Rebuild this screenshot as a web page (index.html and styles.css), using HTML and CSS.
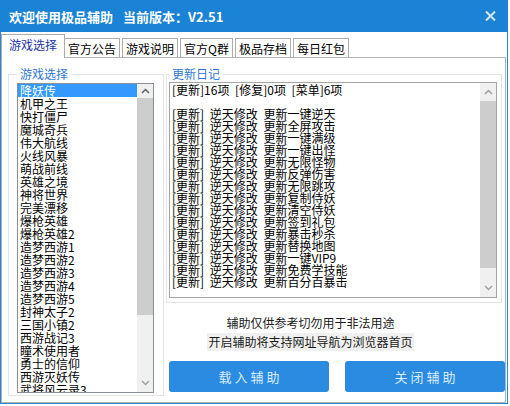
FILE: index.html
```html
<!DOCTYPE html>
<html>

<head>
    <meta charset="utf-8">
    <title>极品辅助</title>
    <link rel="stylesheet" href="styles.css">
</head>

<body>
    <div class="window">
        <header class="titlebar">
            <span class="title">欢迎使用极品辅助</span>
            <span class="version">当前版本：V2.51</span>
            <svg class="close" width="11" height="10" viewBox="0 0 11 10">
                <path d="M1 0.5 L10 9.5 M10 0.5 L1 9.5" stroke="#d4e8f8" stroke-width="2" fill="none" />
            </svg>
        </header>

        <nav class="tabs">
            <span class="tab active">游戏选择</span>
            <span class="tab second">官方公告</span>
            <span class="tab">游戏说明</span>
            <span class="tab">官方Q群</span>
            <span class="tab">极品存档</span>
            <span class="tab">每日红包</span>
        </nav>

        <div class="panel">
            <fieldset class="group games">
                <legend>游戏选择</legend>
                <div class="listbox">
                    <ul class="items">
                        <li class="selected">降妖传</li>
                        <li>机甲之王</li>
                        <li>快打僵尸</li>
                        <li>魔城奇兵</li>
                        <li>伟大航线</li>
                        <li>火线风暴</li>
                        <li>萌战前线</li>
                        <li>英雄之境</li>
                        <li>神将世界</li>
                        <li>完美漂移</li>
                        <li>爆枪英雄</li>
                        <li>爆枪英雄2</li>
                        <li>造梦西游1</li>
                        <li>造梦西游2</li>
                        <li>造梦西游3</li>
                        <li>造梦西游4</li>
                        <li>造梦西游5</li>
                        <li>封神太子2</li>
                        <li>三国小镇2</li>
                        <li>西游战记3</li>
                        <li>瞳术使用者</li>
                        <li>勇士的信仰</li>
                        <li>西游灭妖传</li>
                        <li>武将风云录3</li>
                    </ul>
                    <div class="vscroll list-scroll">
                        <span class="arrow"><svg width="9" height="6" viewBox="0 0 9 6"><path d="M1 5 L4.5 1.5 L8 5" stroke="#606060" stroke-width="1.5" fill="none" /></svg></span>
                        <span class="thumb"></span>
                        <span class="track"></span>
                        <span class="arrow"><svg width="9" height="6" viewBox="0 0 9 6"><path d="M1 1 L4.5 4.5 L8 1" stroke="#a0a0a0" stroke-width="1.5" fill="none" /></svg></span>
                    </div>
                </div>
            </fieldset>

            <div class="side">
                <fieldset class="group log-group">
                    <legend>更新日记</legend>
                    <div class="textbox">
<pre class="log">[更新]16项 [修复]0项 [菜单]6项

[更新] 逆天修改 更新一键逆天
[更新] 逆天修改 更新全屏攻击
[更新] 逆天修改 更新一键满级
[更新] 逆天修改 更新一键出怪
[更新] 逆天修改 更新无限怪物
[更新] 逆天修改 更新反弹伤害
[更新] 逆天修改 更新无限跳攻
[更新] 逆天修改 更新复制侍妖
[更新] 逆天修改 更新清空侍妖
[更新] 逆天修改 更新签到礼包
[更新] 逆天修改 更新暴击秒杀
[更新] 逆天修改 更新替换地图
[更新] 逆天修改 更新一键VIP9
[更新] 逆天修改 更新免费学技能
[更新] 逆天修改 更新百分百暴击</pre>
                        <div class="vscroll log-scroll">
                            <span class="arrow"><svg width="9" height="6" viewBox="0 0 9 6"><path d="M1 5 L4.5 1.5 L8 5" stroke="#a0a0a0" stroke-width="1.5" fill="none" /></svg></span>
                            <span class="thumb"></span>
                            <span class="track"></span>
                            <span class="arrow"><svg width="9" height="6" viewBox="0 0 9 6"><path d="M1 1 L4.5 4.5 L8 1" stroke="#a0a0a0" stroke-width="1.5" fill="none" /></svg></span>
                        </div>
                    </div>
                </fieldset>

                <div class="notes">
                    <p>辅助仅供参考切勿用于非法用途</p>
                    <p><span class="hint">开启辅助将支持网址导航为浏览器首页</span></p>
                </div>

                <div class="actions">
                    <button class="btn">载入辅助</button>
                    <button class="btn">关闭辅助</button>
                </div>
            </div>
        </div>
    </div>
</body>

</html>
```

FILE: styles.css
```css
body {
    margin: 0;
    background: #fff;
    font-family: "Noto Sans CJK SC", "Noto Sans", sans-serif;
    font-size: 12px;
    color: #000;
}

.window {
    width: 508px;
    height: 404px;
    box-sizing: border-box;
    display: flex;
    flex-direction: column;
    border: 1px solid #2a86d4;
    border-top: none;
}

/* title bar */
.titlebar {
    height: 32px;
    flex: none;
    display: flex;
    align-items: center;
    padding: 0 10px 0 9px;
    margin: 0 -1px;
    background: #1a83d6;
    color: #fff;
    font-size: 13px;
    font-weight: bold;
}

.version {
    margin-left: 10px;
}

.close {
    margin-left: auto;
    margin-right: 2px;
}

/* tab strip */
.tabs {
    height: 25px;
    flex: none;
    display: flex;
    align-items: flex-end;
    gap: 2px;
    position: relative;
    z-index: 1;
}

.tab {
    height: 19px;
    box-sizing: border-box;
    padding: 2px 3px 0;
    line-height: 15px;
    border: 1px solid #acacac;
    border-bottom: none;
    background: #fff;
}

.tab.active {
    height: 24px;
    padding: 2px 7px 0;
    color: #1d34a8;
    margin-bottom: -1px;
}

.tab.second {
    margin-left: -3px;
}

/* tab page */
.panel {
    flex: 1;
    display: flex;
    border: 1px solid #b4b4b4;
    border-right-color: #9fb7cf;
    margin-right: 1px;
    padding: 9px 0 0 6px;
}

.group {
    margin: 0;
    min-width: 0;
    border: 1px solid #e3e3e3;
}

.group legend {
    padding: 0 3px;
    line-height: 14px;
    color: #2f78d2;
}

.games {
    width: 156px;
    box-sizing: border-box;
    padding: 2px 9px 2px 8px;
    align-self: flex-start;
}

/* game list */
.listbox {
    display: flex;
    width: 137px;
    height: 310px;
    box-sizing: border-box;
    border: 1px solid #8a8f96;
}

.items {
    list-style: none;
    margin: 0;
    padding: 0;
    flex: 1;
    overflow: hidden;
}

.items li {
    height: 13px;
    line-height: 13px;
    padding-left: 2px;
    white-space: nowrap;
}

.items li.selected {
    background: #3399ff;
    color: #fff;
}

/* scroll bars */
.vscroll {
    width: 16px;
    flex: none;
    display: flex;
    flex-direction: column;
    background: #f0f0f0;
}

.vscroll .arrow {
    display: flex;
    align-items: center;
    justify-content: center;
}

.vscroll .thumb {
    background: #cdcdcd;
}

.vscroll .track {
    flex: 1;
}

.list-scroll .arrow {
    height: 14px;
}

.list-scroll .arrow:last-child {
    height: 18px;
}

.list-scroll .thumb {
    height: 217px;
}

.log-scroll .arrow {
    height: 17px;
}

.log-scroll .thumb {
    height: 167px;
    margin-top: 1px;
}

.log-scroll .track {
    flex: none;
    height: 11px;
}

/* right column */
.side {
    width: 339px;
    margin-left: 2px;
    display: flex;
    flex-direction: column;
}

.log-group {
    width: 336px;
    box-sizing: border-box;
    padding: 1px 4px 4px 2px;
}

.textbox {
    display: flex;
    height: 216px;
    box-sizing: border-box;
    border: 1px solid #a5a5a5;
}

.log {
    flex: 1;
    margin: 0;
    padding: 1px 0 0 2px;
    font-family: "Noto Sans CJK SC", sans-serif;
    font-size: 12px;
    line-height: 12px;
    word-spacing: 3px;
    overflow: hidden;
}

.notes {
    width: 289px;
    margin-top: 11px;
    text-align: center;
    color: #1a1a1a;
}

.notes p {
    margin: 0;
    line-height: 18px;
}

.hint {
    display: inline-block;
    background: #f0f0f0;
    padding: 0 1px;
    line-height: 18px;
    margin-top: 1px;
}

.actions {
    display: flex;
    gap: 16px;
    margin-top: 10px;
    padding-left: 3px;
}

.btn {
    width: 160px;
    height: 31px;
    border: none;
    border-radius: 3px;
    background: #2b8be0;
    color: #d9ecff;
    font-family: "Noto Sans CJK SC", sans-serif;
    font-size: 13px;
    letter-spacing: 3px;
    padding: 0 0 0 3px;
}
```
